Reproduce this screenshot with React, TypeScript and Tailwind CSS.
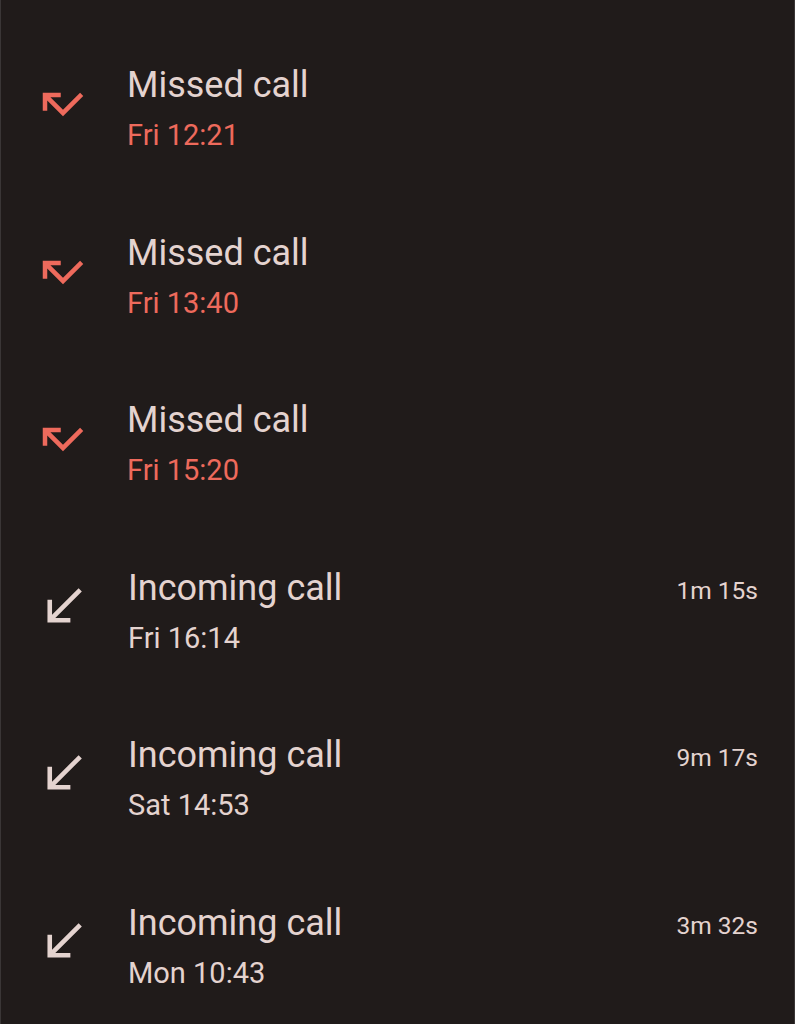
import React from "react";

type Call = { type: "missed" | "incoming"; time: string; duration?: string };

const calls: Call[] = [
  { type: "missed", time: "Fri 12:21" },
  { type: "missed", time: "Fri 13:40" },
  { type: "missed", time: "Fri 15:20" },
  { type: "incoming", time: "Fri 16:14", duration: "1m 15s" },
  { type: "incoming", time: "Sat 14:53", duration: "9m 17s" },
  { type: "incoming", time: "Mon 10:43", duration: "3m 32s" },
];

function MissedIcon() {
  return (
    <svg viewBox="0 0 24 24" className="w-[54px] h-[54px] shrink-0 mt-[77px]" fill="#ee6a5c">
      <path d="M19.59 7L12 14.59 6.41 9H11V7H3v8h2v-4.59l7 7 9-9z" />
    </svg>
  );
}

function IncomingIcon() {
  return (
    <svg viewBox="0 0 24 24" className="w-[55px] h-[55px] shrink-0 mt-[76px]" fill="#e4d3cf">
      <path d="M20 5.41L18.59 4 7 15.59V9H5v10h10v-2H8.41z" />
    </svg>
  );
}

export default function App() {
  return (
    <div
      className="w-[795px] min-h-[1024px] bg-[#201b1a] border-x border-[#3a3636]"
      style={{ fontFamily: "Roboto, 'Noto Sans', sans-serif" }}
    >
      {calls.map((c, i) => (
        <div key={i} className="flex h-[167.5px] pl-[35px] pr-[36px]">
          {c.type === "missed" ? <MissedIcon /> : <IncomingIcon />}
          <div className="flex-1 pl-[37px] pt-[63px]">
            <div className="flex items-start justify-between">
              <span className="text-[36px] leading-[44px] text-[#e4d3cf]">
                {c.type === "missed" ? "Missed call" : "Incoming call"}
              </span>
              {c.duration && (
                <span className="text-[24.5px] leading-[30px] mt-[10px] text-[#e4d3cf]">{c.duration}</span>
              )}
            </div>
            <div
              className={
                "text-[29px] leading-[36px] mt-[10px] " +
                (c.type === "missed" ? "text-[#ee6a5c]" : "text-[#e4d3cf]")
              }
            >
              {c.time}
            </div>
          </div>
        </div>
      ))}
    </div>
  );
}
